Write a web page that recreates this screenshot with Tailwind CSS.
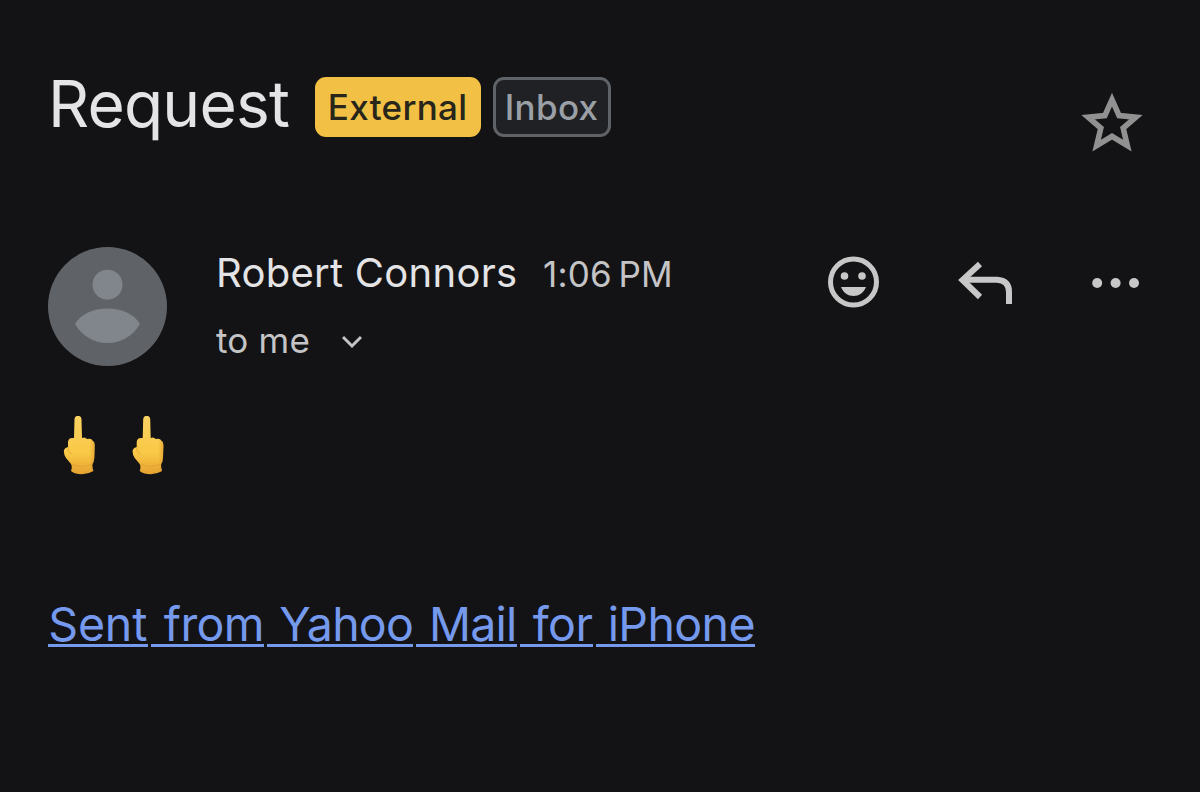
<!DOCTYPE html>
<html lang="en">
<head>
<meta charset="utf-8">
<title>Request</title>
<script src="https://cdn.jsdelivr.net/npm/@tailwindcss/browser@4"></script>
</head>
<body class="h-[792px] w-[1200px] overflow-hidden bg-[#131315] pl-12 font-['Inter','Liberation_Sans',sans-serif] text-[#e4e4e6]">
<header class="flex h-[247px] items-start pt-[77px]">
  <h1 class="w-[266.600px] whitespace-nowrap text-[64px] leading-[54px] tracking-[-0.8px]"><span>Request</span></h1>
  <span class="flex h-[60px] w-[166px] items-center justify-center rounded-[11px] bg-[#f1c044] text-[35px] font-medium tracking-[0.3px] text-[#28251a]"><span>External</span></span>
  <span class="ml-3 flex h-[60px] w-[118px] items-center justify-center rounded-[11px] border-3 border-[#5f6368] bg-[#202124] text-[35px] font-medium tracking-[0.3px] text-[#9aa0a6]"><span>Inbox</span></span>
  <svg class="ml-[470px] mt-[16px] h-[60px] w-[62px]" viewBox="0 0 61 59" fill="none" stroke="#919191" stroke-width="5.5"><path d="M30.5 6.500 L37.5 22.2 L54 23.8 L41.5 34.5 L45.6 51.8 L30.5 42.6 L15.4 51.8 L19.5 34.5 L7 23.8 L23.5 22.2 Z"/></svg>
</header>
<section class="flex h-[169px]">
  <svg class="h-[120px] w-[120px]" viewBox="0 0 120 120"><circle cx="59.5" cy="59.5" r="59.5" fill="#5f6368"/><g fill="#80868b"><circle cx="59.5" cy="37.7" r="15"/><path d="M27 77 C33 67 45 61.5 59.5 61.5 S86 67 92 77 C85 89 73 96 59.5 96 S34 89 27 77Z"/></g></svg>
  <div class="ml-12 w-[612px]">
    <div class="flex h-[50px] items-baseline whitespace-nowrap leading-[51px]"><span class="w-[327px] text-[40px] tracking-[0.27px]">Robert Connors</span><span class="text-[35px] tracking-[0.2px] text-[#c4c4c6]">1:06&#8201;PM</span></div>
    <div class="flex h-[50px] mt-[18px] items-center text-[35px] leading-[50px] text-[#c4c4c6]"><span class="w-[126px] tracking-[0.2px]">to me</span><svg class="mt-1 h-3.5 w-5" viewBox="0 0 20 14" fill="none" stroke="currentColor" stroke-width="3"><path d="M1 2 L10 11 L19 2"/></svg></div>
  </div>
  <svg class="mt-[9px] h-[52px] w-[52px]" viewBox="0 0 52 52" fill="#c7c7c7"><circle cx="25.5" cy="26" r="23" fill="none" stroke="#c7c7c7" stroke-width="5"/><circle cx="16.500" cy="20" r="3.800"/><circle cx="34" cy="20" r="3.800"/><path d="M13 31 H38 C35.5 37 31 40 25.5 40 S15.5 37 13 31Z"/></svg>
  <svg class="ml-[78px] mt-[13px] h-[46px] w-[56px]" viewBox="0 0 56 46" fill="none" stroke="#c7c7c7" stroke-width="6"><path d="M22 4 L4.500 20 L22 37"/><path d="M5 19.800 H39 Q51 20.500 51 32 V44"/></svg>
  <svg class="ml-[78px] mt-[30px] h-3 w-12" viewBox="0 0 48 12" fill="#c7c7c7"><circle cx="5.200" cy="6" r="5"/><circle cx="23.600" cy="6" r="5"/><circle cx="42" cy="6" r="5"/></svg>
</section>
<main>
  <div class="flex h-[180px] pl-[15px]">
    <svg class="h-[60px] w-[102px]" viewBox="0 0 102 60" role="img">
      <defs>
        <linearGradient id="skin" x1="0" y1="0" x2="0" y2="1"><stop offset="0" stop-color="#fbd261"/><stop offset=".65" stop-color="#f9c846"/><stop offset="1" stop-color="#e5a130"/></linearGradient>
        <linearGradient id="side" x1="0" y1="0" x2="1" y2="0"><stop offset=".6" stop-color="#d58a24" stop-opacity="0"/><stop offset="1" stop-color="#d58a24" stop-opacity=".5"/></linearGradient>
        <g id="hand">
          <path d="M11.500 3 Q11.900 -.2 15 -.2 Q18.100 -.2 18.500 3 L19 22 Q22 20.500 24 23 Q28.500 22 29.500 24.500 Q32 26 31.700 30 L31.300 42 Q31 46 29.500 48 Q29 51 30.400 55 Q25 58.300 19 58.300 Q12 58.300 8 55 Q9.500 51 8 48 L3 42 Q.4 38 1 34 Q2 31.500 5 31 V26 Q5.500 21.500 10 22 L11 22 Z" fill="url(#skin)"/>
          <path d="M19 22 Q22 20.500 24 23 Q28.500 22 29.500 24.500 Q32 26 31.700 30 L31.300 42 Q31 46 29.500 48 Q29 51 30.400 55 Q25 58.300 19 58.300 Z" fill="url(#side)"/>
          <path d="M5.500 31 Q4 36 9 38 M9 48.500 Q18 52 28 48.500" fill="none" stroke="#d99228" stroke-opacity=".4" stroke-width="1.200"/>
        </g>
      </defs>
      <use href="#hand"/><use href="#hand" x="68.700"/>
    </svg>
  </div>
  <a class="flex gap-[3px] whitespace-nowrap text-[46.500px] leading-[56px] text-[#7599ec]">
    <span class="flex h-[51px] w-[99.500px] justify-center border-b-3 border-current"><span class="tracking-[-0.2px]">Sent</span></span>
    <span class="flex h-[51px] w-[113.500px] justify-end border-b-3 border-current"><span class="tracking-[-0.6px]">from</span></span>
    <span class="flex h-[51px] w-[146px] justify-end border-b-3 border-current"><span class="tracking-[-0.8px]">Yahoo</span></span>
    <span class="flex h-[51px] w-[100.500px] justify-end border-b-3 border-current"><span class="tracking-[-0.8px]">Mail</span></span>
    <span class="flex h-[51px] w-[73px] justify-end border-b-3 border-current"><span class="tracking-[-0.5px]">for</span></span>
    <span class="flex h-[51px] w-[159.500px] justify-end border-b-3 border-current"><span class="tracking-[-0.6px]">iPhone</span></span>
  </a>
</main>
</body>
</html>
